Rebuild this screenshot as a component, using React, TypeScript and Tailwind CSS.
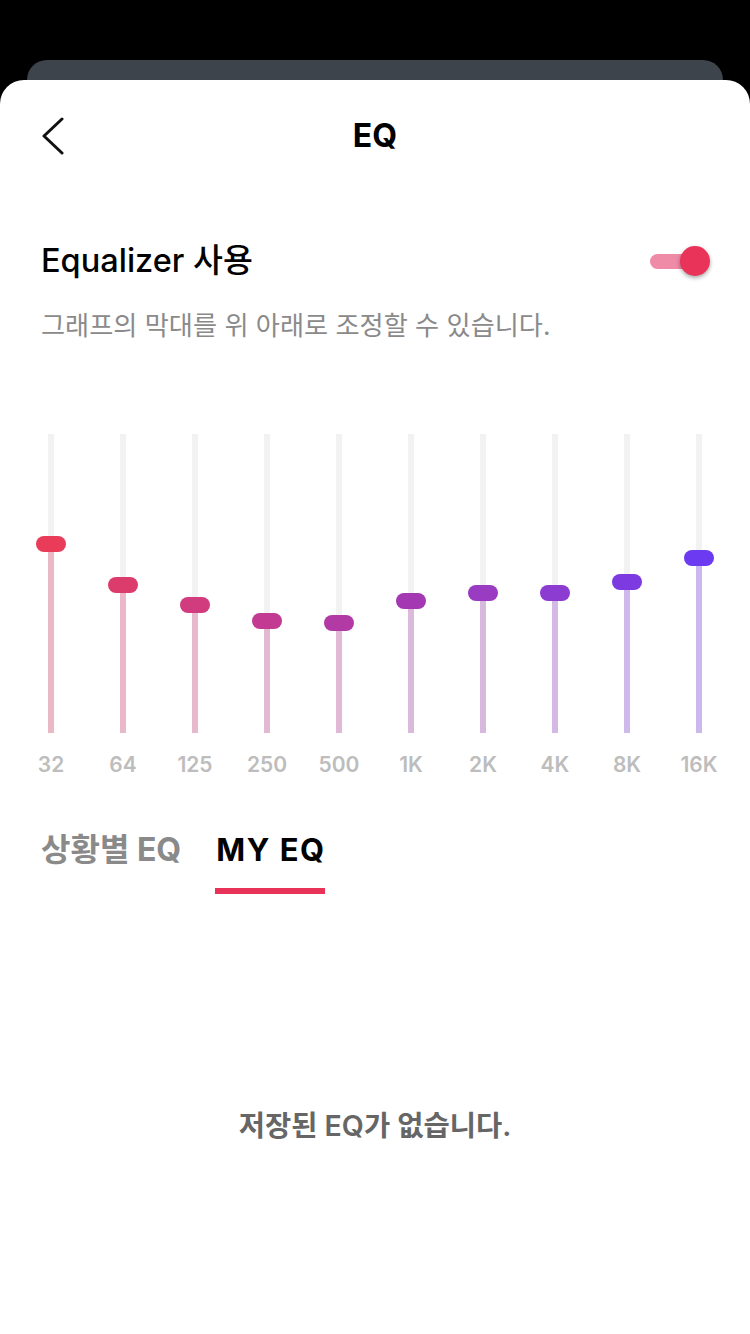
import React from "react";

const bands = [
  { label: "32", y: 110, knob: "#e83c58", fill: "#ebb9c5" },
  { label: "64", y: 151, knob: "#dc3c6c", fill: "#e9b9c9" },
  { label: "125", y: 171, knob: "#d03c7e", fill: "#e6b9cd" },
  { label: "250", y: 187, knob: "#c23a92", fill: "#e2b9d2" },
  { label: "500", y: 189, knob: "#b23aa4", fill: "#dfb9d6" },
  { label: "1K", y: 167, knob: "#a438b2", fill: "#dbb9da" },
  { label: "2K", y: 159, knob: "#9a3cc2", fill: "#d7b9de" },
  { label: "4K", y: 159, knob: "#8c3cd0", fill: "#d3b9e4" },
  { label: "8K", y: 148, knob: "#7c3ae0", fill: "#cfb9ea" },
  { label: "16K", y: 124, knob: "#6c3af0", fill: "#cbb9ee" },
];

const font = {
  fontFamily: '"Inter", "Noto Sans CJK KR", sans-serif',
};

export default function App() {
  return (
    <div className="w-[750px] h-[1334px] bg-black relative overflow-hidden" style={font}>
      <div className="absolute left-[27px] right-[27px] top-[60px] h-[40px] bg-[#3d444b] rounded-t-[20px]" />
      <div className="absolute left-0 right-0 top-[80px] bottom-0 bg-white rounded-t-[24px] flex flex-col">
        {/* header */}
        <div className="h-[114px] relative flex items-center justify-center">
          <svg
            className="absolute left-[40px] top-[37px]"
            width="26"
            height="38"
            viewBox="0 0 26 38"
            fill="none"
          >
            <path d="M22 2 L4 19 L22 36" stroke="#111" strokeWidth="3" strokeLinecap="round" strokeLinejoin="round" />
          </svg>
          <span className="text-[32px] font-bold text-black leading-none mt-[-2px]">EQ</span>
        </div>

        {/* Equalizer toggle row */}
        <div className="mt-[47px] h-[40px] px-[41px] flex items-center justify-between">
          <span className="text-[32.5px] font-medium text-black leading-[40px]">Equalizer 사용</span>
          <div className="relative w-[60px] h-[30px] mr-[-1px]">
            <div className="absolute left-0 top-[8px] w-[52px] h-[15px] rounded-full bg-[#ef8aa7]" />
            <div className="absolute right-0 top-0 w-[30px] h-[30px] rounded-full bg-[#e93358] shadow-[0_2px_4px_rgba(0,0,0,0.35)]" />
          </div>
        </div>

        <div className="mt-[27px] px-[41px] text-[26.2px] leading-[36px] text-[#8a8a8a]">
          그래프의 막대를 위 아래로 조정할 수 있습니다.
        </div>

        {/* sliders */}
        <div className="mt-[90px] px-[15px] grid grid-cols-10">
          {bands.map((b) => (
            <div key={b.label} className="flex flex-col items-center">
              <div className="relative w-[6px] h-[299px] bg-[#f2f2f2]">
                <div
                  className="absolute left-0 right-0 bottom-0"
                  style={{ top: b.y, background: b.fill }}
                />
                <div
                  className="absolute left-[-12px] w-[30px] h-[16px] rounded-full"
                  style={{ top: b.y - 8, background: b.knob }}
                />
              </div>
              <div className="mt-[17px] text-[21px] leading-[30px] font-semibold text-[#bdbdbd]">{b.label}</div>
            </div>
          ))}
        </div>

        {/* tabs */}
        <div className="mt-[50px] pl-[41px] flex gap-[34px]">
          <div className="flex flex-col">
            <span className="text-[32px] font-bold leading-[40px] text-[#8a8a8a]">상황별 EQ</span>
          </div>
          <div className="flex flex-col items-center w-[110px]">
            <span className="text-[31px] font-bold leading-[40px] text-black tracking-[1.5px] mr-[-1.5px]">MY EQ</span>
            <div className="mt-[18px] w-[110px] h-[6px] bg-[#e83257]" />
          </div>
        </div>

        <div className="mt-[212px] text-center text-[28.5px] font-semibold leading-[40px] text-[#666]">
          저장된 EQ가 없습니다.
        </div>
      </div>
    </div>
  );
}
